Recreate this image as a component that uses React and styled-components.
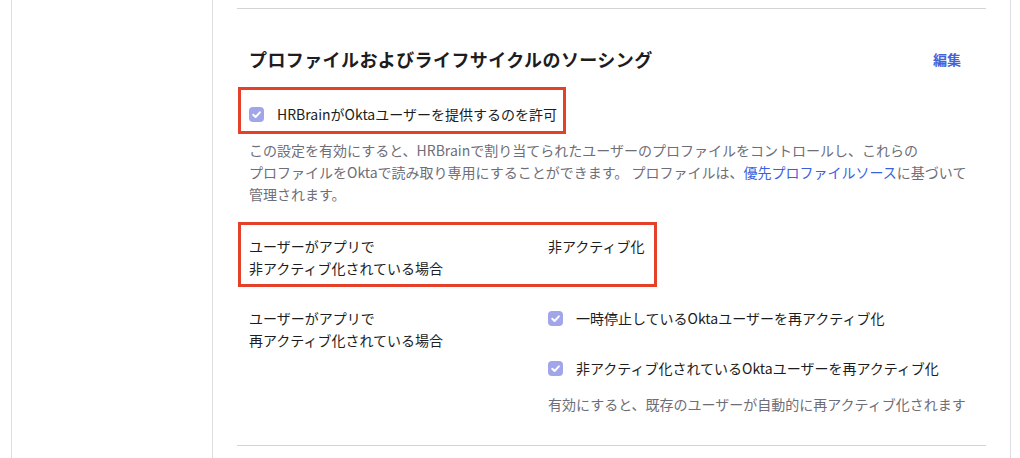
import React from "react";
import styled, { createGlobalStyle } from "styled-components";

const GlobalStyle = createGlobalStyle`
  html, body {
    margin: 0;
    padding: 0;
    background: #fff;
  }
  body {
    font-family: "Noto Sans CJK JP", "Noto Sans", sans-serif;
    color: #1d1d21;
    font-size: 14px;
  }
`;

const Frame = styled.div`
  display: flex;
  height: 100vh;
  overflow: hidden;
  padding: 0 9px 0 11px;
  box-sizing: border-box;
`;

const Sidebar = styled.aside`
  width: 202px;
  flex-shrink: 0;
  box-sizing: border-box;
  border-left: 1px solid #dedee0;
  border-right: 1px solid #dedee0;
`;

const Main = styled.main`
  flex: 1;
  min-width: 0;
  padding: 8px 24px 0 24px;
  border-right: 1px solid #dedee0;
`;

const Section = styled.section`
  border-top: 1px solid #d4d4d6;
  padding: ${(p) => (p.$empty ? "40px 12px 0" : "38px 25px 30px 12px")};
`;

const Header = styled.div`
  display: flex;
  justify-content: space-between;
  align-items: center;
`;

const Title = styled.h2`
  margin: 0;
  font-size: 18px;
  line-height: 24px;
  font-weight: 700;
  letter-spacing: 0.4px;
  color: #1d1d21;
`;

const EditLink = styled.a`
  font-size: 14px;
  font-weight: 700;
  line-height: 24px;
  color: #4662d9;
  text-decoration: none;
  cursor: pointer;
`;

const Highlight = styled.div`
  border: 3px solid #e5402a;
  margin: ${(p) => p.$top}px 0 0 -11px;
  padding: ${(p) => p.$pad};
  width: fit-content;
`;

const CheckRow = styled.label`
  display: flex;
  align-items: center;
  gap: 13px;
  line-height: 22px;
  font-size: 14px;
  color: #1d1d21;
  white-space: nowrap;
`;

const Description = styled.p`
  margin: ${(p) => p.$top}px 0 0;
  font-size: 14px;
  line-height: 22px;
  color: #6e6e78;
  white-space: nowrap;
`;

const Link = styled.a`
  color: #3a5fdf;
  text-decoration: none;
`;

const FieldGrid = styled.div`
  display: grid;
  grid-template-columns: 299px auto;
  margin-top: ${(p) => p.$top || 0}px;
  line-height: 22px;
`;

const FieldLabel = styled.div`
  font-size: 14px;
  color: #1d1d21;
`;

const FieldValue = styled.div`
  display: flex;
  flex-direction: column;
  gap: 28px;
  font-size: 14px;
`;

const Box = styled.span`
  display: inline-flex;
  flex-shrink: 0;
  width: 15px;
  height: 15px;
`;

function Check() {
  return (
    <Box>
      <svg width="15" height="15" viewBox="0 0 15 15">
        <rect width="15" height="15" rx="4" fill="#a1a5ea" />
        <path
          d="M4.2 7.7 L6.6 10 L10.9 5.3"
          fill="none"
          stroke="#fff"
          strokeWidth="1.9"
          strokeLinecap="round"
          strokeLinejoin="round"
        />
      </svg>
    </Box>
  );
}

export default function App() {
  return (
    <>
      <GlobalStyle />
      <Frame>
        <Sidebar />
        <Main>
          <Section>
            <Header>
              <Title>プロファイルおよびライフサイクルのソーシング</Title>
              <EditLink>編集</EditLink>
            </Header>

            <Highlight $top={16} $pad="13px 6px 6px 8px">
              <CheckRow>
                <Check />
                HRBrainがOktaユーザーを提供するのを許可
              </CheckRow>
            </Highlight>

            <Description $top={5}>
              この設定を有効にすると、HRBrainで割り当てられたユーザーのプロファイルをコントロールし、これらの
              <br />
              プロファイルをOktaで読み取り専用にすることができます。 プロファイルは、
              <Link>優先プロファイルソース</Link>に基づいて
              <br />
              管理されます。
            </Description>

            <Highlight $top={17} $pad="10px 10px 5px 8px">
              <FieldGrid>
                <FieldLabel>
                  ユーザーがアプリで
                  <br />
                  非アクティブ化されている場合
                </FieldLabel>
                <FieldValue>非アクティブ化</FieldValue>
              </FieldGrid>
            </Highlight>

            <FieldGrid $top={20}>
              <FieldLabel>
                ユーザーがアプリで
                <br />
                再アクティブ化されている場合
              </FieldLabel>
              <div>
                <FieldValue>
                  <CheckRow>
                    <Check />
                    一時停止しているOktaユーザーを再アクティブ化
                  </CheckRow>
                  <CheckRow>
                    <Check />
                    非アクティブ化されているOktaユーザーを再アクティブ化
                  </CheckRow>
                </FieldValue>
                <Description $top={14}>
                  有効にすると、既存のユーザーが自動的に再アクティブ化されます
                </Description>
              </div>
            </FieldGrid>
          </Section>
          <Section $empty />
        </Main>
      </Frame>
    </>
  );
}
